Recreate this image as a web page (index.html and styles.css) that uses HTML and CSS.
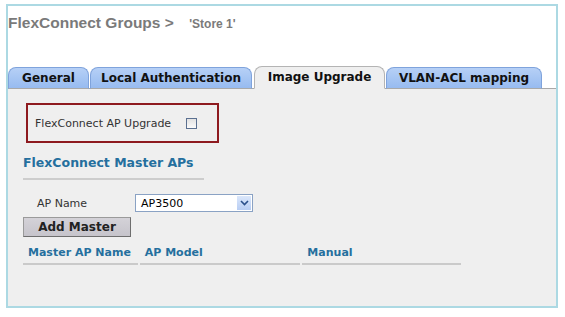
FILE: index.html
```html
<!DOCTYPE html>
<html lang="en">
<head>
  <meta charset="UTF-8">
  <title>FlexConnect Groups - Store 1</title>
  <link rel="stylesheet" href="styles.css">
</head>
<body>
  <div class="frame">
    <div class="header">
      <span class="title">FlexConnect Groups &gt;</span>
      <span class="subtitle">'Store 1'</span>
    </div>

    <div class="tabs">
      <div class="tab tab-general">General</div>
      <div class="tab tab-local">Local Authentication</div>
      <div class="tab tab-image active">Image Upgrade</div>
      <div class="tab tab-vlan">VLAN-ACL mapping</div>
    </div>

    <div class="panel">
      <div class="upgrade-box">
        <label for="apUpgrade">FlexConnect AP Upgrade</label>
        <input type="checkbox" id="apUpgrade">
      </div>

      <h2 class="section-title">FlexConnect Master APs</h2>

      <div class="form-row">
        <label for="apName">AP Name</label>
        <div class="select">
          <span>AP3500</span>
          <span class="select-arrow">
            <svg width="9" height="6" viewBox="0 0 9 6"><path d="M1 1 L4.5 4.5 L8 1" fill="none" stroke="#2a4f8a" stroke-width="1.6"/></svg>
          </span>
        </div>
      </div>

      <button class="btn" type="button">Add Master</button>

      <div class="table-head">
        <div class="col col-name">Master AP Name</div>
        <div class="col col-model">AP Model</div>
        <div class="col col-manual">Manual</div>
      </div>
    </div>
  </div>
</body>
</html>
```
FILE: styles.css
```css
body {
  margin: 0;
  padding: 0;
  background: #ffffff;
  font-family: "DejaVu Sans", Verdana, sans-serif;
  color: #333;
}

/* Moldura externa */
.frame {
  margin: 4px 0 0 6px;
  width: 548px;
  height: 300px;
  border: 2px solid #acd9e3;
  display: flex;
  flex-direction: column;
}

.header {
  height: 60px;
  padding: 8px 0 0 0;
  box-sizing: border-box;
  font-family: "Liberation Sans", Arial, sans-serif;
  font-weight: bold;
  color: #7a7a7a;
}
.title {
  font-size: 15.5px;
}
.subtitle {
  font-size: 12px;
  margin-left: 11px;
}

/* Abas */
.tabs {
  display: flex;
  align-items: flex-end;
  height: 22px;
  padding-left: 0;
  border-bottom: 1px solid #a9a9a9;
}
.tab {
  height: 20px;
  line-height: 20px;
  margin-right: 1px;
  text-align: center;
  font-size: 12px;
  font-weight: bold;
  color: #111;
  background: linear-gradient(#b6d0f6, #97bbf0);
  border: 1px solid #7fa3dc;
  border-radius: 8px 8px 0 0;
  margin-bottom: -1px;
  border-bottom: 1px solid #a9a9a9;
}
.tab-general { width: 79px; }
.tab-local { width: 160px; margin-right: 2px; }
.tab-image { width: 129px; }
.tab-vlan { width: 154px; }
.tab.active {
  height: 21px;
  background: #efefef;
  border-color: #b4b4b4;
  border-bottom: 1px solid #efefef;
}

/* Painel */
.panel {
  flex: 1;
  background: #efefef;
  padding: 14px 0 0 15px;
}

.upgrade-box {
  width: 182px;
  height: 36px;
  border: 2px solid #8e1a1f;
  margin-left: 3px;
  display: flex;
  align-items: center;
  padding-left: 7px;
  box-sizing: content-box;
  font-size: 11px;
}
.upgrade-box input {
  width: 11px;
  height: 11px;
  margin: 0 0 0 15px;
  appearance: none;
  border: 1px solid #5b7090;
  background: linear-gradient(#e2e2e2, #fbfbfb);
}

.section-title {
  width: 181px;
  margin: 12px 0 0 0;
  padding-bottom: 8px;
  border-bottom: 2px solid #cdcdcd;
  font-size: 12.5px;
  color: #256f9e;
}

.form-row {
  display: flex;
  align-items: center;
  margin-top: 14px;
  font-size: 11px;
}
.form-row label {
  width: 98px;
  padding-left: 14px;
}
.select {
  width: 111px;
  height: 16px;
  border: 1px solid #8aa2c4;
  background: #fff;
  display: flex;
  align-items: center;
  justify-content: space-between;
  padding-left: 5px;
  box-sizing: content-box;
  font-size: 11px;
  color: #000;
}
.select-arrow {
  width: 14px;
  height: 14px;
  margin-right: 1px;
  background: linear-gradient(#dbe7fb, #b8cdf3);
  display: flex;
  align-items: center;
  justify-content: center;
}

.btn {
  display: block;
  margin-top: 5px;
  width: 108px;
  height: 20px;
  padding: 0;
  background: linear-gradient(#d4d2d8, #c6c4cb);
  border: 1px solid #9a9a9a;
  border-right-color: #6e6e6e;
  border-bottom-color: #6e6e6e;
  font-family: "DejaVu Sans", Verdana, sans-serif;
  font-size: 12px;
  font-weight: bold;
  color: #222;
}

.table-head {
  display: flex;
  margin-top: 9px;
  width: 438px;
  font-size: 11px;
  font-weight: bold;
  color: #256f9e;
}
.col {
  padding: 0 0 4px 5px;
  border-bottom: 2px solid #cacaca;
  margin-right: 2px;
}
.col-name { width: 110px; }
.col-model { width: 156px; }
.col-manual { width: 154px; margin-right: 0; }
```
